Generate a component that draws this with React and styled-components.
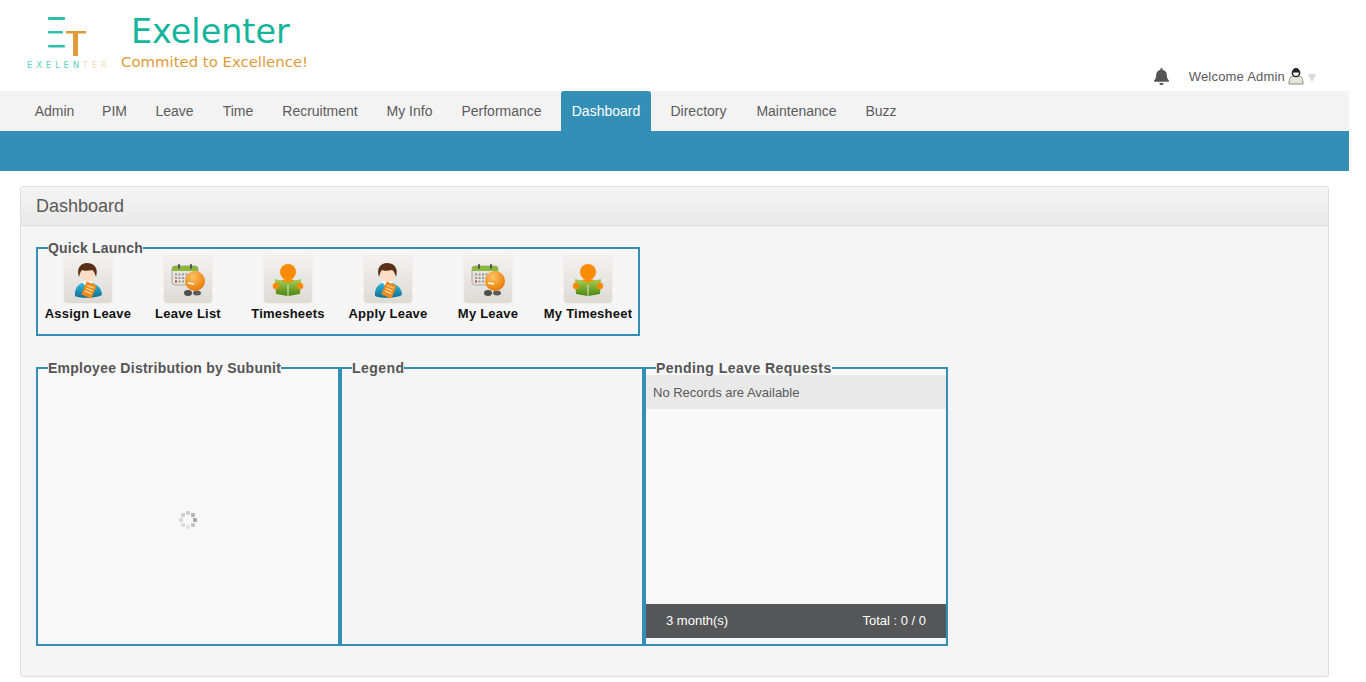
import React from "react";
import styled, { createGlobalStyle } from "styled-components";
import { FaBell } from "react-icons/fa";

const GlobalStyle = createGlobalStyle`
	html, body {
		margin: 0;
		padding: 0;
		background: #fff;
		overflow: hidden;
	}
	body {
		font-family: "Liberation Sans", Arial, sans-serif;
		color: #555;
	}
`;

const Page = styled.div`
	width: 1349px;
	height: 682px;
`;

const Header = styled.header`
	height: 91px;
	display: flex;
	justify-content: space-between;
	align-items: flex-start;
	background: #fff;
`;

const Brand = styled.div`
	display: flex;
	padding: 14px 0 0 27px;
`;

const Mark = styled.div`
	width: 80px;
	display: flex;
	flex-direction: column;
	align-items: flex-start;
`;

const MarkGlyph = styled.svg`
	margin-left: 20px;
`;

const MarkName = styled.div`
	margin-top: 4px;
	font-family: "DejaVu Sans", sans-serif;
	font-size: 8.5px;
	line-height: 10px;
	letter-spacing: 3.8px;
	white-space: nowrap;
	color: #5fcfbb;
	span {
		color: #f5dcb8;
	}
`;

const BrandText = styled.div`
	margin-left: 14px;
	font-family: "DejaVu Sans", sans-serif;
`;

const BrandTitle = styled.div`
	margin: 1px 0 0 10px;
	font-size: 33.4px;
	line-height: 33px;
	color: #13b59c;
`;

const Slogan = styled.div`
	margin-top: 6px;
	font-size: 14.9px;
	line-height: 16px;
	color: #e09b38;
	white-space: nowrap;
`;

const UserArea = styled.div`
	display: flex;
	align-items: center;
	margin: 66px 33px 0 0;
	height: 20px;
	font-size: 13px;
	letter-spacing: 0.2px;
	color: #5a5a5a;
`;

const Bell = styled(FaBell)`
	width: 17px;
	height: 17px;
	margin-right: 19px;
	color: #555;
`;

const UserGlyph = styled.svg`
	margin-left: 3px;
`;

const Caret = styled.span`
	width: 0;
	height: 0;
	margin: 3px 0 0 4px;
	border-left: 4px solid transparent;
	border-right: 4px solid transparent;
	border-top: 8px solid #d9d9d9;
`;

const Nav = styled.nav`
	height: 40px;
	display: flex;
	padding-left: 25px;
	gap: 9px;
	background: #f3f3f3;
`;

const NavItem = styled.a`
	width: ${(p) => p.$width}px;
	text-align: center;
	white-space: nowrap;
	font-size: 14px;
	line-height: 41px;
	color: ${(p) => (p.$active ? "#fff" : "#5b5b5b")};
	background: ${(p) => (p.$active ? "#348fb7" : "transparent")};
	border-radius: 3px 3px 0 0;
`;

const Band = styled.div`
	height: 40px;
	background: #348fb7;
`;

const Main = styled.main`
	padding: 15px 20px 0;
`;

const Panel = styled.section`
	height: 491px;
	box-sizing: border-box;
	border: 1px solid #dedede;
	border-radius: 3px;
	background: #f5f5f5;
`;

const PanelHead = styled.h1`
	margin: 0;
	height: 39px;
	box-sizing: border-box;
	padding-left: 15px;
	font-size: 18px;
	font-weight: normal;
	line-height: 38px;
	color: #5a5a5a;
	background: linear-gradient(#f4f4f4, #e9e9e9);
	border-bottom: 1px solid #dcdcdc;
`;

const PanelBody = styled.div`
	padding: 15px 15px 0;
`;

const Group = styled.fieldset`
	margin: 0;
	padding: 0;
	min-width: 0;
	box-sizing: border-box;
	width: ${(p) => p.$width}px;
	height: ${(p) => p.$height}px;
	border: 2px solid #348fb7;
	background: ${(p) => p.$fill || "transparent"};
`;

const GroupTitle = styled.legend`
	margin-left: 10px;
	padding: 0;
	font-size: 14px;
	font-weight: bold;
	line-height: 14px;
	letter-spacing: ${(p) => p.$track || 0.45}px;
	white-space: nowrap;
	color: #555;
`;

const LaunchRow = styled.div`
	display: grid;
	grid-template-columns: repeat(6, 100px);
`;

const LaunchItem = styled.a`
	display: flex;
	flex-direction: column;
	align-items: center;
	font-size: 13px;
	font-weight: bold;
	letter-spacing: 0.22px;
	line-height: 16px;
	color: #111;
	white-space: nowrap;
`;

const Tile = styled.span`
	width: 50px;
	height: 49px;
	box-sizing: border-box;
	margin-bottom: 2px;
	display: flex;
	align-items: center;
	justify-content: center;
	border: 1px solid #f1eee8;
	border-radius: 4px;
	background: linear-gradient(#f3f2f0, #dcdad5);
`;

const ChartRow = styled.div`
	display: flex;
	margin-top: 25px;
`;

const Spinner = styled.svg`
	display: block;
	margin: 136px auto 0;
`;

const Empty = styled.div`
	height: 34px;
	padding-left: 7px;
	font-size: 13px;
	line-height: 36px;
	color: #5a5a5a;
	background: #e9e9e9;
`;

const Footer = styled.div`
	margin-top: 195px;
	height: 34px;
	display: flex;
	justify-content: space-between;
	padding: 0 20px;
	font-size: 13px;
	line-height: 34px;
	color: #fff;
	background: #555657;
`;

const AgentIcon = () => (
	<svg width="40" height="40" viewBox="0 0 40 40">
		<defs>
			<linearGradient id="agentCoat" x1="0" y1="0" x2="0" y2="1">
				<stop offset="0" stopColor="#35bfe0" />
				<stop offset="1" stopColor="#0f6f96" />
			</linearGradient>
		</defs>
		<path d="M7 36c-1-9 5-14 12-14s15 5 15 13c-5 3-22 4-27 1z" fill="url(#agentCoat)" />
		<path d="M14 22l5 6 6-6-6-2z" fill="#fff" />
		<ellipse cx="19.5" cy="13.5" rx="7.5" ry="8.5" fill="#fbdcc6" />
		<path d="M11 17C8 8 13 3 19 3s12 4 9 14c-1-3-2-6-4-7-4 1-8 1-10 0-2 2-2 4-3 7z" fill="#5a3018" />
		<g transform="rotate(22 21 30)">
			<rect x="15.5" y="23" width="11" height="14" rx="1" fill="#f08a1d" />
			<path d="M17.5 26.5h7M17.5 29.5h7M17.5 32.5h7" stroke="#ffe0a8" strokeWidth="1.2" />
		</g>
	</svg>
);

const CalendarIcon = () => (
	<svg width="40" height="40" viewBox="0 0 40 40">
		<defs>
			<radialGradient id="calendarBall" cx="0.4" cy="0.3" r="0.8">
				<stop offset="0" stopColor="#fbc26a" />
				<stop offset="0.6" stopColor="#f3921f" />
				<stop offset="1" stopColor="#e0700c" />
			</radialGradient>
		</defs>
		<rect x="4" y="6" width="26" height="19" rx="3" fill="#e5e3df" stroke="#a9a8a2" />
		<path d="M4 11V9a3 3 0 0 1 3-3h20a3 3 0 0 1 3 3v2z" fill="#8cb63c" />
		<rect x="10" y="4" width="2" height="5" rx="1" fill="#555" />
		<rect x="22" y="4" width="2" height="5" rx="1" fill="#555" />
		<path d="M7 14.5h18M7 18h12M7 21.5h10" stroke="#9a9a9a" strokeWidth="2" strokeDasharray="2 1.5" />
		<rect x="7" y="20.5" width="2" height="2" fill="#d9472b" />
		<ellipse cx="20" cy="33" rx="4" ry="3" fill="#4f4f4a" />
		<ellipse cx="29" cy="33" rx="4" ry="2.5" fill="#5b5b55" />
		<circle cx="27" cy="21" r="10" fill="url(#calendarBall)" />
		<path d="M20 23l6 1" stroke="#fff" strokeWidth="1.5" />
	</svg>
);

const ReaderIcon = () => (
	<svg width="40" height="40" viewBox="0 0 40 40">
		<defs>
			<linearGradient id="readerBook" x1="0" y1="0" x2="0" y2="1">
				<stop offset="0" stopColor="#a9cf55" />
				<stop offset="1" stopColor="#4c8610" />
			</linearGradient>
		</defs>
		<circle cx="20" cy="12" r="8" fill="#fb8a05" />
		<path d="M11 22c3-4 15-4 18 0l-9 3z" fill="#fb8a05" />
		<path d="M7 19l12.5 3v14L8 34z" fill="url(#readerBook)" />
		<path d="M33 19l-12.5 3v14L32 34z" fill="url(#readerBook)" />
		<circle cx="8" cy="26" r="3.2" fill="#fb8a05" />
		<circle cx="32" cy="26" r="3.2" fill="#fb8a05" />
	</svg>
);

const navItems = [
	{ label: "Admin", width: 59 },
	{ label: "PIM", width: 43 },
	{ label: "Leave", width: 59 },
	{ label: "Time", width: 50 },
	{ label: "Recruitment", width: 96 },
	{ label: "My Info", width: 65 },
	{ label: "Performance", width: 101 },
	{ label: "Dashboard", width: 90 },
	{ label: "Directory", width: 77 },
	{ label: "Maintenance", width: 101 },
	{ label: "Buzz", width: 50 },
];

const launchItems = [
	{ label: "Assign Leave", Icon: AgentIcon },
	{ label: "Leave List", Icon: CalendarIcon },
	{ label: "Timesheets", Icon: ReaderIcon },
	{ label: "Apply Leave", Icon: AgentIcon },
	{ label: "My Leave", Icon: CalendarIcon },
	{ label: "My Timesheet", Icon: ReaderIcon },
];

const spinnerDots = [
	[9, 2, "#cfcfcf"],
	[14, 4, "#b5b5b5"],
	[16, 9, "#a8a8a8"],
	[14, 14, "#c4c4c4"],
	[9, 16, "#e2e2e2"],
	[4, 14, "#dcdcdc"],
	[2, 9, "#d6d6d6"],
	[4, 4, "#d0d0d0"],
];

const App = () => {
	return (
		<Page>
			<GlobalStyle />
			<Header>
				<Brand>
					<Mark>
						<MarkGlyph width="40" height="42" viewBox="0 0 40 42">
							<g fill="#2fc0a8">
								<rect x="1" y="3" width="17" height="3" rx="1" />
								<rect x="1" y="17" width="15" height="2.5" rx="1" />
								<rect x="1" y="31" width="17" height="2.5" rx="1" />
							</g>
							<g fill="#e09b38">
								<rect x="19" y="17" width="20" height="2.5" />
								<rect x="26" y="17" width="5" height="25" />
							</g>
						</MarkGlyph>
						<MarkName>
							EXELEN<span>TER</span>
						</MarkName>
					</Mark>
					<BrandText>
						<BrandTitle>Exelenter</BrandTitle>
						<Slogan>Commited to Excellence!</Slogan>
					</BrandText>
				</Brand>
				<UserArea>
					<Bell />
					Welcome Admin
					<UserGlyph width="16" height="18" viewBox="0 0 16 18">
						<path d="M1 17c0-5 1-7 4-8h6c3 1 4 3 4 8z" fill="#e6e4d8" stroke="#8d8c80" />
						<circle cx="8" cy="6" r="3.6" fill="#fff" stroke="#222" strokeWidth="1.5" />
						<path d="M4.4 5.5a3.6 4.5 0 0 1 7.2 0z" fill="#222" />
					</UserGlyph>
					<Caret />
				</UserArea>
			</Header>
			<Nav>
				{navItems.map(({ label, width }) => (
					<NavItem key={label} $width={width} $active={label === "Dashboard"}>
						{label}
					</NavItem>
				))}
			</Nav>
			<Band />
			<Main>
				<Panel>
					<PanelHead>Dashboard</PanelHead>
					<PanelBody>
						<Group $width={604} $height={95}>
							<GroupTitle $track={0.2}>Quick Launch</GroupTitle>
							<LaunchRow>
								{launchItems.map(({ label, Icon }) => (
									<LaunchItem key={label}>
										<Tile>
											<Icon />
										</Tile>
										{label}
									</LaunchItem>
								))}
							</LaunchRow>
						</Group>
						<ChartRow>
							<Group $width={304} $height={285} $fill="#f8f8f8">
								<GroupTitle $track={0.26}>Employee Distribution by Subunit</GroupTitle>
								<Spinner width="18" height="18" viewBox="0 0 18 18">
									{spinnerDots.map(([x, y, color]) => (
										<rect key={`${x}-${y}`} x={x - 2} y={y - 2} width="4" height="4" rx="1" fill={color} />
									))}
								</Spinner>
							</Group>
							<Group $width={304} $height={285}>
								<GroupTitle>Legend</GroupTitle>
							</Group>
							<Group $width={304} $height={285} $fill="#f8f8f8">
								<GroupTitle>Pending Leave Requests</GroupTitle>
								<Empty>No Records are Available</Empty>
								<Footer>
									<span>3 month(s)</span>
									<span>Total : 0 / 0</span>
								</Footer>
							</Group>
						</ChartRow>
					</PanelBody>
				</Panel>
			</Main>
		</Page>
	);
};

export default App;
